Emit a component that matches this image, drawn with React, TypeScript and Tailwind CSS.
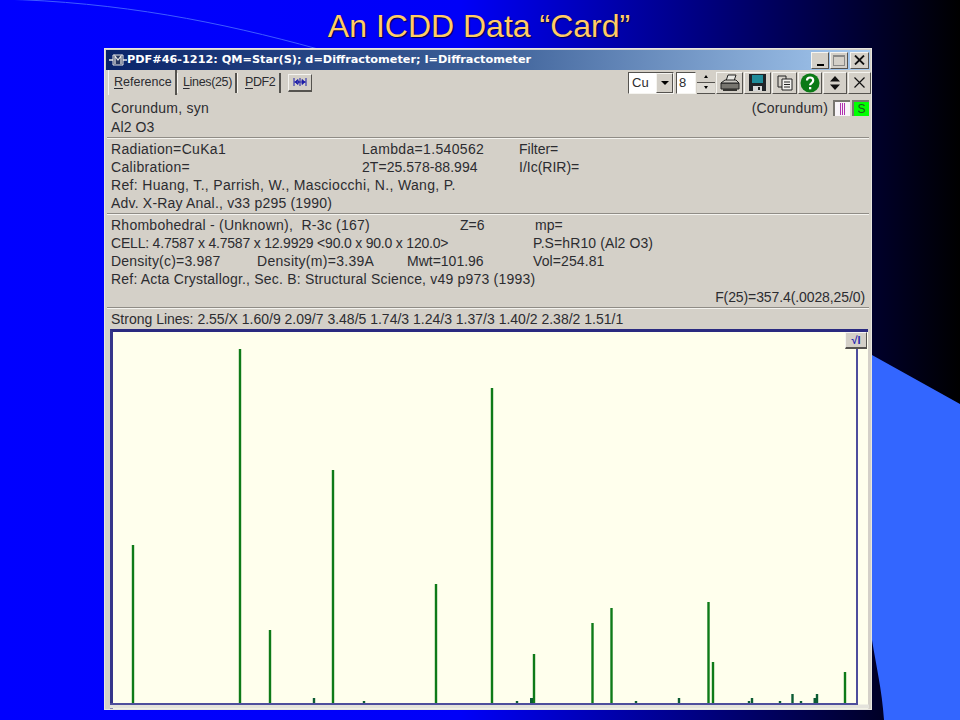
import React from "react";

const bars: [number, number, number?][] = [
  [133, 546], [240, 350], [270, 631], [314, 699], [333, 471], [364, 702], [436, 585], [492, 389],
  [517, 702], [532, 699, 4], [534, 655], [592.5, 624], [611.5, 609], [636, 702], [679, 699], [708.5, 603],
  [713, 663], [749, 702], [752, 699], [780, 702], [792.5, 695], [801, 702], [815, 699, 3], [817, 695], [845, 673],
];

function Row({ children, className = "" }: { children: React.ReactNode; className?: string }) {
  return <div className={"flex h-[18px] items-center whitespace-pre pl-[6px] leading-[18px] " + className}>{children}</div>;
}

function Sep() {
  return <div className="mx-[2px] h-[2px] border-t border-b border-t-[#8f8c86] border-b-[#f4f3ef]" />;
}

function Raised({ children, className = "" }: { children: React.ReactNode; className?: string }) {
  return (
    <div className={"flex h-[22px] items-center justify-center border border-t-[#f5f4f0] border-l-[#f5f4f0] border-r-[#55534f] border-b-[#55534f] bg-[#d4d0c8] " + className}>
      {children}
    </div>
  );
}

function Tab({ label, ul, className }: { label: string; ul: string; className: string }) {
  return (
    <div className={"flex items-center border-r-2 border-r-[#55534f] border-l border-l-[#f5f4f0] " + className}>
      <span className="underline decoration-1 underline-offset-2">{ul}</span>
      <span>{label}</span>
    </div>
  );
}

export default function App() {
  return (
    <div className="relative h-[720px] w-[960px] overflow-hidden bg-[linear-gradient(90deg,#0000ff_0%,#0000f8_48%,#000000_100%)] font-['Liberation_Sans',Arial,sans-serif]">
      <svg className="absolute left-0 top-0" width="960" height="720" viewBox="0 0 960 720" fill="none">
        <path d="M0 -1 C120 2 220 22 318 49" stroke="#3f5cff" strokeWidth="1" />
        <path d="M872 355 L960 404 L960 720 L884 720 C882 690 876 665 872 640 Z" fill="#3366ff" />
      </svg>

      <div className="relative flex h-[48px] items-start justify-center pt-[6px]">
        <h1 className="ml-[-2px] text-[32px] leading-[40px] text-[#ffcc66] [text-shadow:1px_1px_1px_#000050]">An ICDD Data “Card”</h1>
      </div>

      <div className="relative ml-[104px] flex h-[662px] w-[768px] flex-col border border-[#e8e6e0] bg-[#d4d0c8] text-[14px] text-[#2c2c30]">
        {/* title bar */}
        <div className="mx-[1px] mt-[1px] flex h-[20px] items-center bg-[linear-gradient(90deg,#0a246a_0%,#3d6098_50%,#a6caf0_100%)] pl-[3px] pr-[1px]">
          <svg width="18" height="14" viewBox="0 0 18 14" fill="none">
            <path d="M0 7h4M14 7h4" stroke="#e8e8e8" strokeWidth="1.5" />
            <path d="M4 2h10v10H4z" fill="#26365e" stroke="#e8e8e8" />
            <path d="M6 11V3l3 4 3-4v8" stroke="#e8e8e8" strokeWidth="1.2" />
          </svg>
          <span className="font-['DejaVu_Sans',sans-serif] text-[11.25px] font-bold text-white">PDF#46-1212: QM=Star(S); d=Diffractometer; I=Diffractometer</span>
          <div className="ml-auto flex gap-[1px]">
            <div className="flex h-[17px] w-[18px] items-end justify-center border border-t-[#f5f4f0] border-l-[#f5f4f0] border-r-[#55534f] border-b-[#55534f] bg-[#d4d0c8] pb-[2px]">
              <div className="h-[2px] w-[7px] bg-black" />
            </div>
            <div className="flex h-[17px] w-[18px] items-center justify-center border border-t-[#f5f4f0] border-l-[#f5f4f0] border-r-[#55534f] border-b-[#55534f] bg-[#d4d0c8]">
              <div className="h-[11px] w-[12px] border border-t-2 border-[#8a8a88]" />
            </div>
            <div className="ml-[1px] flex h-[17px] w-[19px] items-center justify-center border border-t-[#f5f4f0] border-l-[#f5f4f0] border-r-[#55534f] border-b-[#55534f] bg-[#d4d0c8]">
              <svg width="11" height="10" viewBox="0 0 11 10"><path d="M1 0.5l9 9M10 0.5l-9 9" stroke="#111" strokeWidth="1.8" /></svg>
            </div>
          </div>
        </div>

        {/* tabs and toolbar */}
        <div className="flex h-[25px] items-center pl-[3px]">
          <div className="flex items-center text-[12.5px]">
            <Tab ul="R" label="eference" className="h-[25px] w-[69px] pl-[5px]" />
            <Tab ul="L" label="ines(25)" className="h-[20px] w-[60px] pl-[5px] tracking-[-0.35px]" />
            <Tab ul="P" label="DF2" className="h-[20px] w-[44px] pl-[7px] tracking-[-0.4px]" />
            <div className="ml-[7px] flex h-[18px] w-[24px] items-center justify-center border border-t-[#f5f4f0] border-l-[#f5f4f0] border-r-[#55534f] border-b-2 border-b-[#55534f]">
              <svg width="14" height="8" viewBox="0 0 14 8" fill="none">
                <path d="M1 0v8M13 0v8M7 0v8" stroke="#1c1ca8" strokeWidth="1" />
                <path d="M1 4h12M2 4l3-2.5v5zM12 4L9 1.5v5zM6.5 4L4 2v4z" fill="#1c1ca8" stroke="#1c1ca8" strokeWidth="0.8" />
              </svg>
            </div>
          </div>

          <div className="ml-auto flex items-center">
            <div className="flex h-[22px] w-[46px] items-center border border-t-[#55534f] border-l-[#55534f] border-r-[#f5f4f0] border-b-[#f5f4f0] bg-white">
              <span className="pl-[3px] text-[13px]">Cu</span>
              <div className="ml-auto flex h-[20px] w-[17px] items-center justify-center border border-t-[#f5f4f0] border-l-[#f5f4f0] border-r-[#55534f] border-b-[#55534f] bg-[#d4d0c8]">
                <div className="h-0 w-0 border-x-[4px] border-t-[4px] border-x-transparent border-t-black" />
              </div>
            </div>
            <div className="ml-[2px] flex h-[22px] w-[20px] items-center border border-t-[#55534f] border-l-[#55534f] border-r-[#f5f4f0] border-b-[#f5f4f0] bg-white pl-[2px] text-[13px]">8</div>
            <div className="ml-[1px] flex w-[18px] flex-col">
              <div className="flex h-[11px] items-center justify-center border-b border-[#55534f] bg-[#d4d0c8]">
                <div className="h-0 w-0 border-x-[2px] border-b-[3px] border-x-transparent border-b-black" />
              </div>
              <div className="flex h-[11px] items-center justify-center border-b border-[#55534f] bg-[#dedbd4]">
                <div className="h-0 w-0 border-x-[2px] border-t-[3px] border-x-transparent border-t-black" />
              </div>
            </div>
            <div className="ml-[1px] flex gap-[1px]">
              <Raised className="w-[27px]">
                <svg width="20" height="18" viewBox="0 0 20 18" fill="none">
                  <path d="M6 7l2-6h8l-2 6z" fill="#e8e8e4" stroke="#222" />
                  <path d="M1 9h18v6H1z" fill="#77756f" stroke="#222" />
                  <path d="M1 9l4-3h11l3 3z" fill="#c8c6c0" stroke="#222" />
                  <path d="M3 15h14v2H3z" fill="#33322f" />
                </svg>
              </Raised>
              <Raised className="w-[27px]">
                <svg width="17" height="17" viewBox="0 0 17 17">
                  <path d="M0 0h17v17H0z" fill="#202428" />
                  <path d="M3 1h11v8H3z" fill="#1f8c9a" />
                  <path d="M4 12h9v5H4z" fill="#d8d8d8" />
                  <path d="M9 13h2v3H9z" fill="#222" />
                </svg>
              </Raised>
              <Raised className="w-[25px]">
                <svg width="16" height="16" viewBox="0 0 16 16" fill="none">
                  <path d="M1 1h8v11H1z" fill="#d4d0c8" stroke="#222" />
                  <path d="M5 4h10v11H5z" fill="#f2f1ee" stroke="#222" />
                  <path d="M7 7h6M7 9.5h6M7 12h6" stroke="#222" />
                </svg>
              </Raised>
              <Raised className="w-[24px]">
                <svg width="20" height="20" viewBox="0 0 20 20">
                  <circle cx="10" cy="10" r="9.5" fill="#0a7a16" />
                  <path d="M7 7.5c0-4 6.2-4 6.2 0 0 2.5-3.1 2.5-3.1 4.8" fill="none" stroke="#fff" strokeWidth="2.2" />
                  <path d="M9 14h2.3v2.3H9z" fill="#fff" />
                </svg>
              </Raised>
              <Raised className="w-[24px]">
                <svg width="12" height="14" viewBox="0 0 12 14"><path d="M6 0l5 5.5H1zM6 14l5-5.5H1z" fill="#111" /></svg>
              </Raised>
              <Raised className="w-[23px]">
                <svg width="11" height="11" viewBox="0 0 11 11"><path d="M0.5 0.5l10 10M10.5 0.5l-10 10" stroke="#111" strokeWidth="1.2" /></svg>
              </Raised>
            </div>
          </div>
        </div>

        {/* details */}
        <div className="mt-[4px]">
          <Row className="pr-[2px]">
            <span className="tracking-[0.23px]">Corundum, syn</span>
            <span className="ml-auto tracking-[0.15px]">(Corundum)</span>
            <div className="ml-[5px] flex h-[16px] w-[17px] items-center justify-center gap-[1px] border-t-2 border-l-2 border-[#77756f] bg-[#f8f4f8]">
              <i className="h-[12px] w-[1px] bg-[#b030b0]" /><i className="h-[12px] w-[1px] bg-[#b030b0]" /><i className="h-[12px] w-[1px] bg-[#b030b0]" />
            </div>
            <div className="ml-[2px] flex h-[16px] w-[17px] items-center justify-center border-t-2 border-l-2 border-[#77756f] bg-[#00ff00] text-[12px] text-[#225522]">S</div>
          </Row>
          <Row className="mt-[1px] tracking-[0.1px]">Al2 O3</Row>
        </div>
        <div className="mt-[1px]"><Sep /></div>
        <div className="mt-[1px]">
          <Row><span className="w-[251px] tracking-[0.33px]">Radiation=CuKa1</span><span className="w-[157px] tracking-[0.33px]">Lambda=1.540562</span><span>Filter=</span></Row>
          <Row><span className="w-[251px] tracking-[0.33px]">Calibration=</span><span className="w-[157px] tracking-[0.05px]">2T=25.578-88.994</span><span>I/Ic(RIR)=</span></Row>
          <Row className="tracking-[0.33px]">Ref: Huang, T., Parrish, W., Masciocchi, N., Wang, P.</Row>
          <Row className="tracking-[0.2px]">Adv. X-Ray Anal., v33 p295 (1990)</Row>
        </div>
        <div className="mt-[1px]"><Sep /></div>
        <div className="mt-[1px]">
          <Row><span className="w-[349px] tracking-[0.25px]">Rhombohedral - (Unknown),  R-3c (167)</span><span className="w-[75px]">Z=6</span><span>mp=</span></Row>
          <Row><span className="w-[422px] tracking-[-0.2px]">CELL: 4.7587 x 4.7587 x 12.9929 &lt;90.0 x 90.0 x 120.0&gt;</span><span className="tracking-[0.1px]">P.S=hR10 (Al2 O3)</span></Row>
          <Row><span className="w-[146px] tracking-[0.2px]">Density(c)=3.987</span><span className="w-[150px] tracking-[0.3px]">Density(m)=3.39A</span><span className="w-[126px]">Mwt=101.96</span><span className="tracking-[0.1px]">Vol=254.81</span></Row>
          <Row className="tracking-[0.2px]">Ref: Acta Crystallogr., Sec. B: Structural Science, v49 p973 (1993)</Row>
          <Row className="justify-end pr-[6px] tracking-[-0.1px]">F(25)=357.4(.0028,25/0)</Row>
        </div>
        <div className="mt-[1px]"><Sep /></div>
        <div className="mt-[1px]">
          <Row>Strong Lines: 2.55/X 1.60/9 2.09/7 3.48/5 1.74/3 1.24/3 1.37/3 1.40/2 2.38/2 1.51/1</Row>
        </div>

        {/* plot */}
        <div className="relative ml-[5px] mr-[3px] mt-[1px] flex-1 border-t-[3px] border-t-[#2a2a80] border-l-[3px] border-l-[#35358a] bg-[#ffffed]">
          <svg className="absolute left-[-3px] top-[-3px]" width="759" height="380" viewBox="110 330 759 380" fill="none">
            <path d="M110 707.5H869" stroke="#e4e3dc" strokeWidth="4" />
            <path d="M857 349V705H110" stroke="#4e4e9c" strokeWidth="2" />
            {bars.map(([x, top, w], i) => (
              <path key={i} d={`M${x} ${top}V704`} stroke={top > 690 ? "#0c5c34" : "#0e7a18"} strokeWidth={w ?? 2.4} />
            ))}
          </svg>
          <div className="absolute right-[1px] top-[0px] flex h-[17px] w-[22px] items-center justify-center border border-t-[#f5f4f0] border-l-[#f5f4f0] border-r-[#55534f] border-b-2 border-b-[#55534f] bg-[#d4d0c8] text-[11px] font-bold leading-none text-[#2a2ab0]">√I</div>
        </div>
      </div>
    </div>
  );
}
